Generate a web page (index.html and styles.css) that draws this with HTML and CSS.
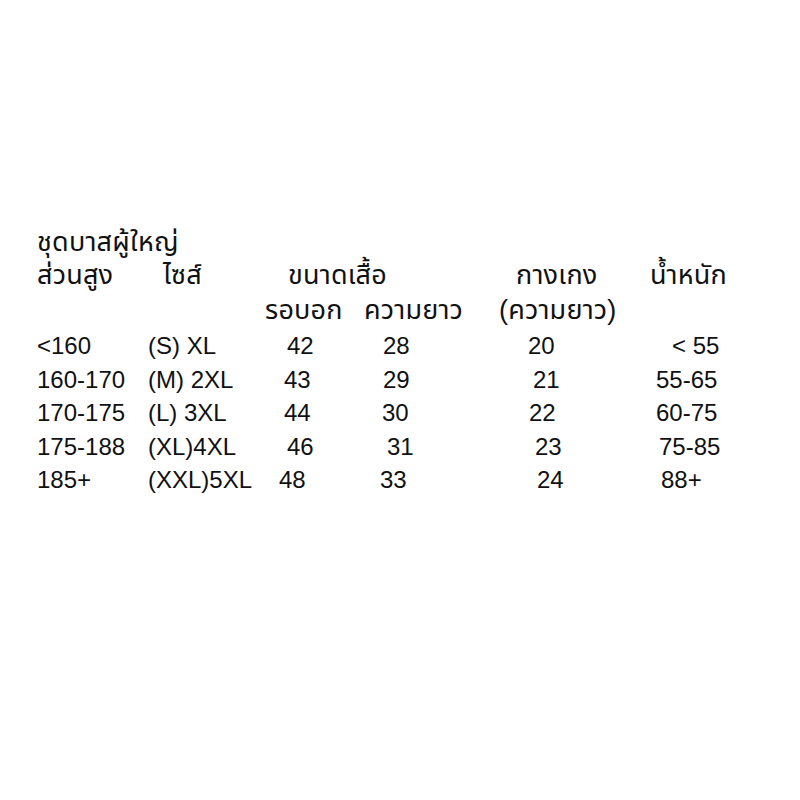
FILE: index.html
```html
<!DOCTYPE html>
<html lang="th">
<head>
<meta charset="utf-8">
<title>ชุดบาสผู้ใหญ่</title>
<link rel="stylesheet" href="styles.css">
</head>
<body>
<div class="sheet">
  <div class="title thai">ชุดบาสผู้ใหญ่</div>
  <div class="head1 thai">
    <span>ส่วนสูง</span>
    <span>ไซส์</span>
    <span>ขนาดเสื้อ</span>
    <span>กางเกง</span>
    <span>น้ำหนัก</span>
  </div>
  <div class="head2 thai">
    <span>รอบอก</span>
    <span>ความยาว</span>
    <span>(ความยาว)</span>
  </div>
  <div class="rows">
    <div class="row">
      <span>&lt;160</span><span>(S) XL</span><span class="n8">42</span><span class="n3">28</span><span>20</span><span class="n16">&lt; 55</span>
    </div>
    <div class="row">
      <span>160-170</span><span>(M) 2XL</span><span class="n5">43</span><span class="n3">29</span><span class="n5">21</span><span>55-65</span>
    </div>
    <div class="row">
      <span>170-175</span><span>(L) 3XL</span><span class="n5">44</span><span class="n2">30</span><span class="n1">22</span><span>60-75</span>
    </div>
    <div class="row">
      <span>175-188</span><span>(XL)4XL</span><span class="n8">46</span><span class="n7">31</span><span class="n7">23</span><span class="n3">75-85</span>
    </div>
    <div class="row">
      <span>185+</span><span>(XXL)5XL</span><span>48</span><span>33</span><span class="n9">24</span><span class="n5">88+</span>
    </div>
  </div>
</div>
</body>
</html>
```

FILE: styles.css
```css
html, body {
  margin: 0;
  padding: 0;
  background: #ffffff;
}

.sheet {
  width: 800px;
  height: 800px;
  box-sizing: border-box;
  padding: 226px 0 0 37px;
  font-family: "Liberation Sans", "Noto Sans Thai", "Noto Sans", sans-serif;
  font-size: 24px;
  color: #111111;
}

.thai {
  font-size: 27px;
  letter-spacing: 0.2px;
}

.title,
.head1,
.head2 {
  height: 33px;
  line-height: 33px;
  white-space: nowrap;
}

.head1 {
  display: grid;
  grid-template-columns: 126px 125px 228px 134px 1fr;
}

.head2 {
  display: grid;
  grid-template-columns: 99px 135px 1fr;
  padding-left: 228px;
  margin-top: 2px;
}

.rows {
  margin-top: 2px;
  display: flex;
  flex-direction: column;
}

.row {
  display: grid;
  grid-template-columns: 111px 131px 101px 148px 128px 1fr;
  height: 33.5px;
  line-height: 33.5px;
  white-space: nowrap;
}

.n1 { padding-left: 1px; }
.n2 { padding-left: 2px; }
.n3 { padding-left: 3px; }
.n5 { padding-left: 5px; }
.n7 { padding-left: 7px; }
.n8 { padding-left: 8px; }
.n9 { padding-left: 9px; }
.n16 { padding-left: 16px; }
```
